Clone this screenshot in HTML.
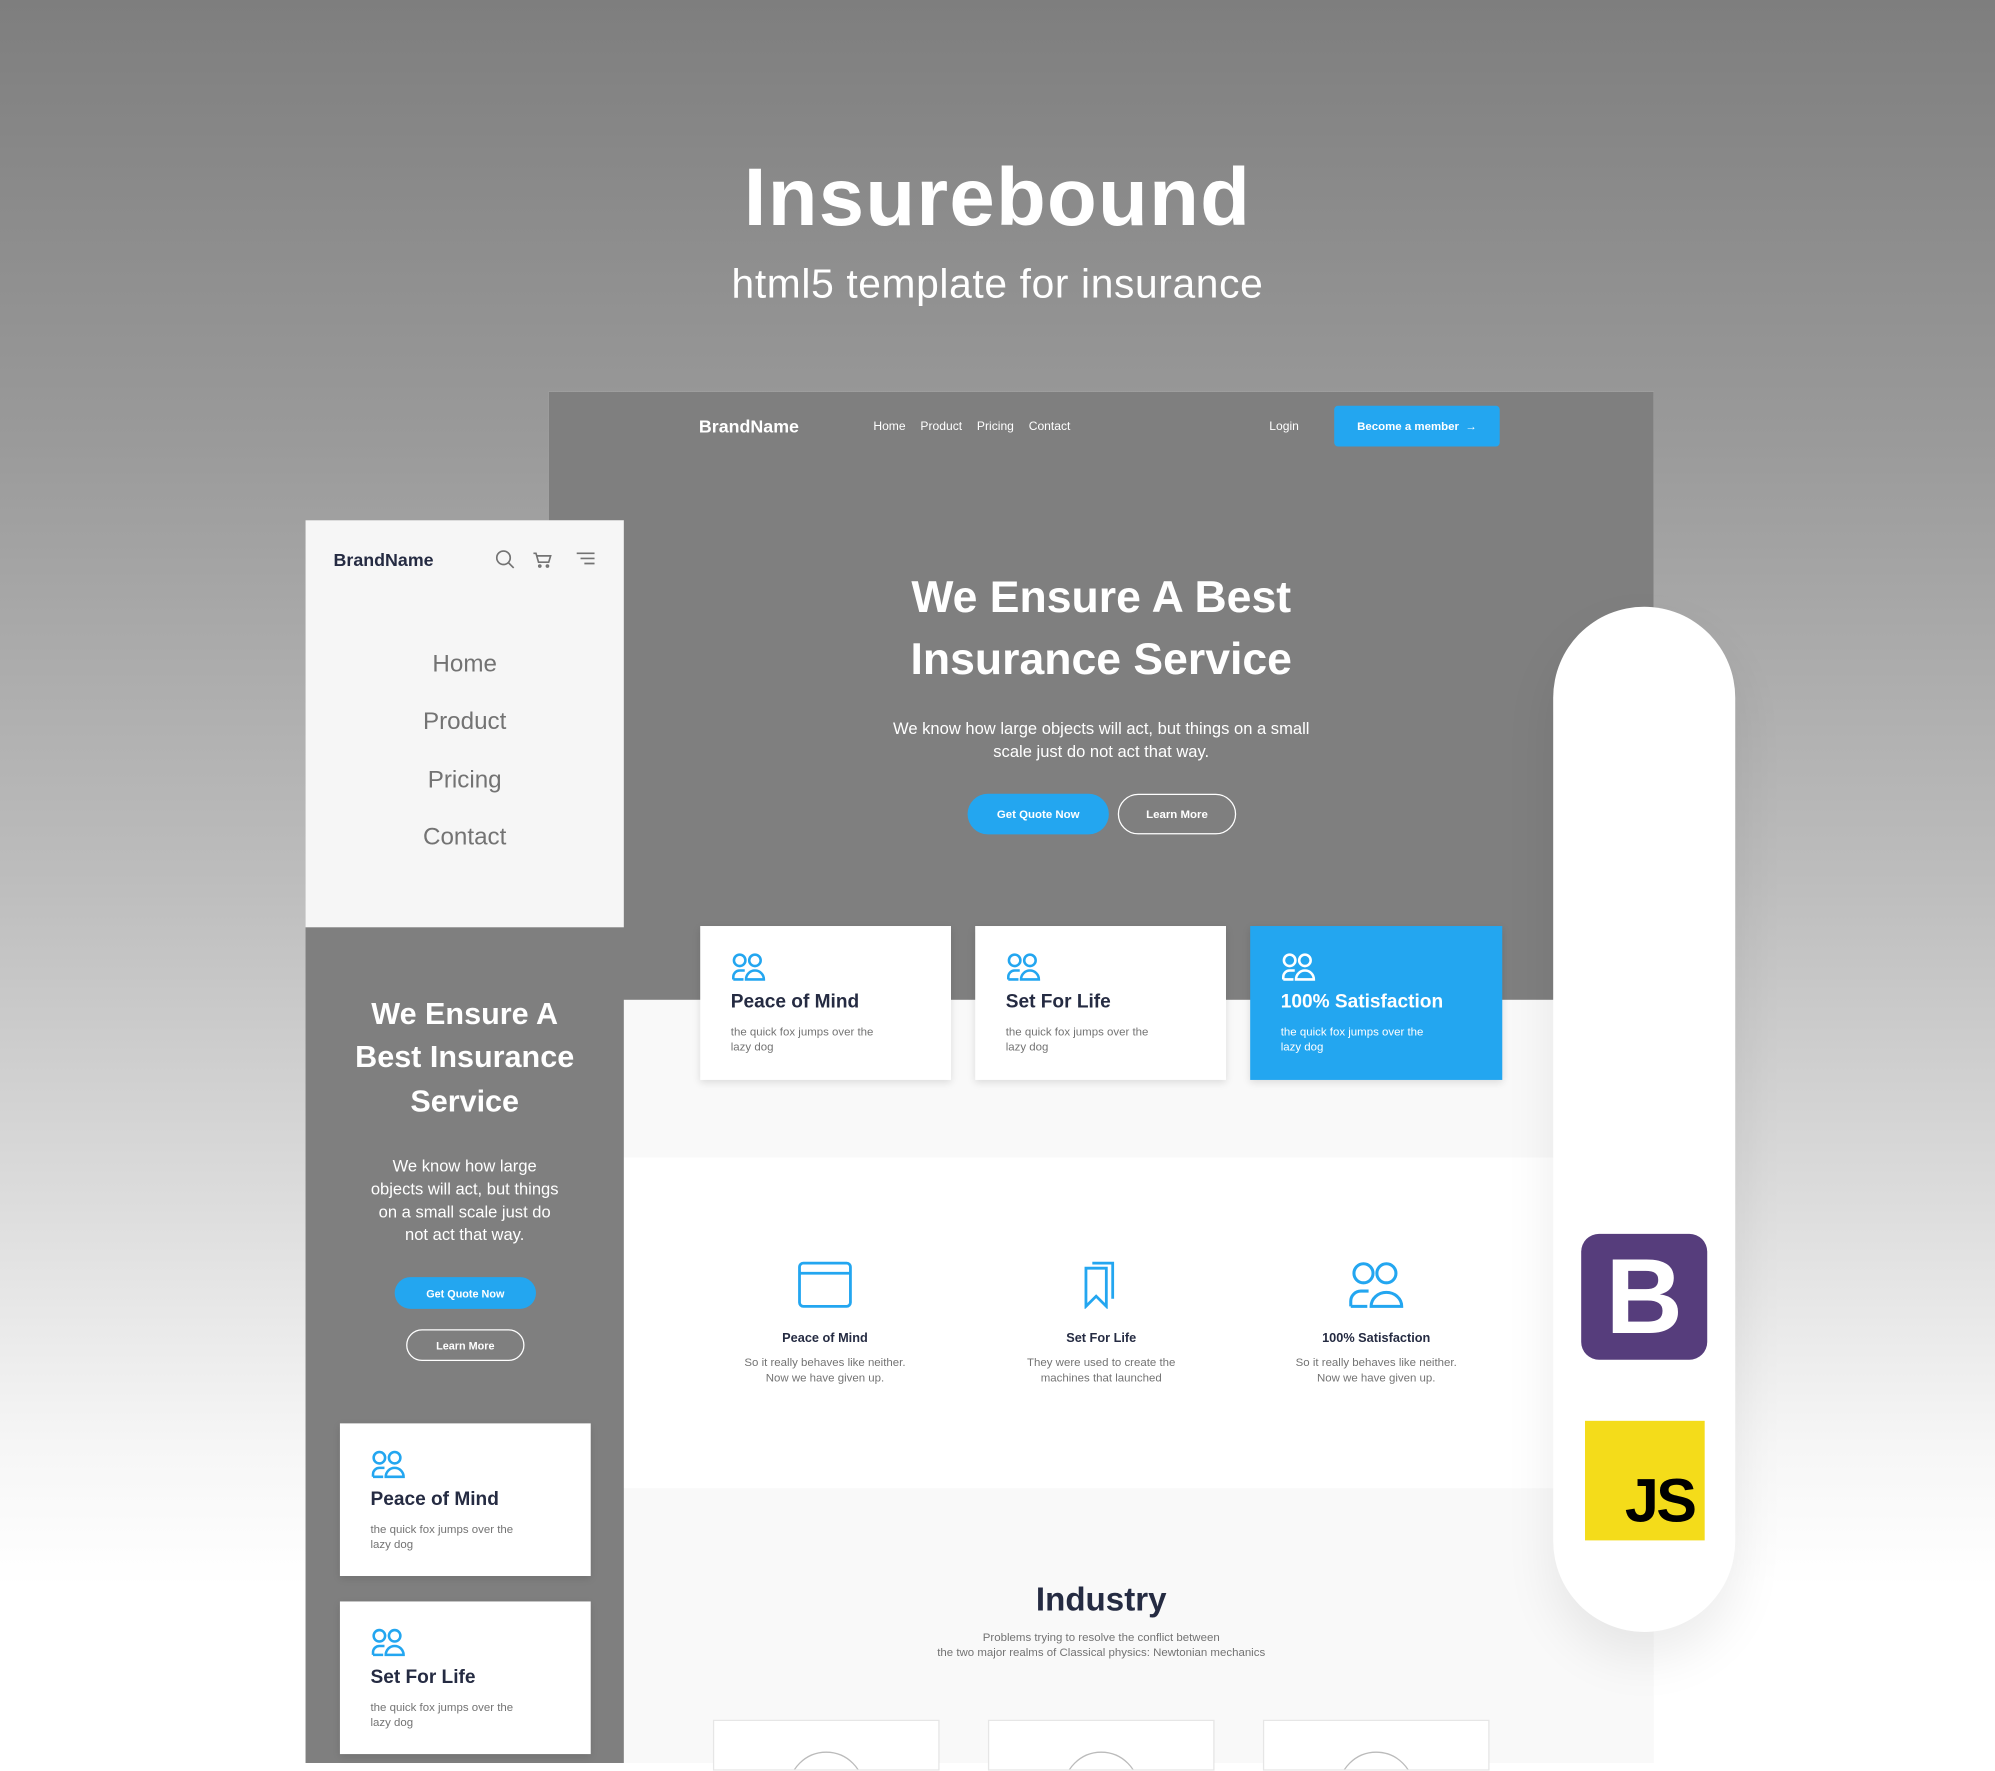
<!DOCTYPE html>
<html><head><meta charset="utf-8"><style>
*{margin:0;padding:0;box-sizing:border-box}
html{background:#fff}
html,body{width:1995px;height:1763px;overflow:hidden}
body{font-family:"Liberation Sans",sans-serif;background:#fff}
#bg{position:absolute;left:0;top:0;width:1995px;height:1763px;background:linear-gradient(180deg,#7e7e7e 0%,#9a9a9a 25%,#bdbdbd 50%,#dcdcdc 68%,#f6f6f6 82%,#fff 90%)}
#w{position:absolute;left:0;top:0;width:1567px;height:1386px;transform:scale(1.2731,1.272);transform-origin:0 0}
.a{position:absolute}
.c{text-align:center}
.b{font-weight:bold}
.btn{position:absolute;border-radius:16px;color:#fff;font-size:9px;font-weight:bold;display:flex;align-items:center;justify-content:center}
.card{position:absolute;background:#fff;box-shadow:0 2px 6px rgba(0,0,0,.12)}
.card h4{position:absolute;left:24px;top:51px;font-size:15px;color:#252b42}
.card p{position:absolute;left:24px;top:77px;font-size:9px;line-height:12px;color:#737373;width:128px}
.card svg{position:absolute;left:24px;top:21px}
</style></head><body><div id="bg"></div><div id="w">
<div class="a c b" style="left:0;width:1567px;top:118px;font-size:64px;color:#fff;letter-spacing:1px">Insurebound</div>
<div class="a c" style="left:0;width:1567px;top:205px;font-size:32px;color:#fff;letter-spacing:.5px">html5 template for insurance</div>

<!-- desktop -->
<div class="a" style="left:431px;top:308px;width:868px;height:1078px;background:#f9f9f9"></div>
<div class="a" style="left:431px;top:308px;width:868px;height:478px;background:#7f7f7f"></div>
<div class="a" style="left:431px;top:910px;width:868px;height:260px;background:#fff"></div>
<div class="a b" style="left:549px;top:327px;font-size:14px;color:#fff">BrandName</div>
<div class="a" style="left:686px;top:330px;font-size:9.5px;color:#fff;word-spacing:9px">Home Product Pricing Contact</div>
<div class="a" style="left:997px;top:330px;font-size:9.5px;color:#fff">Login</div>
<div class="a b" style="left:1048px;top:319px;width:130px;height:32px;background:#23a6f0;border-radius:3px;color:#fff;font-size:9px;display:flex;align-items:center;justify-content:center">Become a member &nbsp;→</div>
<div class="a c b" style="left:600px;width:530px;top:445px;font-size:35px;line-height:49px;color:#fff">We Ensure A Best<br>Insurance Service</div>
<div class="a c" style="left:690px;width:350px;top:564px;font-size:13px;line-height:18px;color:#fff">We know how large objects will act, but things on a small scale just do not act that way.</div>
<div class="btn" style="left:760px;top:624px;width:111px;height:32px;background:#23a6f0">Get Quote Now</div>
<div class="btn" style="left:878px;top:624px;width:93px;height:32px;border:1px solid #fff">Learn More</div>

<svg width="0" height="0" style="position:absolute"><defs><g id="ppl" fill="none" stroke-width="2"><circle cx="7" cy="6" r="4.5"/><circle cx="19" cy="6" r="4.5"/><path d="M2 21v-2a5 5 0 0 1 5-5h4M12 21a7 7 0 0 1 14 0z M2 21h8"/></g></defs></svg>

<div class="card" style="left:550px;top:728px;width:197px;height:121px"><svg width="28" height="24" stroke="#23a6f0"><use href="#ppl"/></svg><h4>Peace of Mind</h4><p>the quick fox jumps over the lazy dog</p></div>
<div class="card" style="left:766px;top:728px;width:197px;height:121px"><svg width="28" height="24" stroke="#23a6f0"><use href="#ppl"/></svg><h4>Set For Life</h4><p>the quick fox jumps over the lazy dog</p></div>
<div class="card" style="left:982px;top:728px;width:198px;height:121px;background:#23a6f0"><svg width="28" height="24" stroke="#fff"><use href="#ppl"/></svg><h4 style="color:#fff">100% Satisfaction</h4><p style="color:#fff">the quick fox jumps over the lazy dog</p></div>

<svg class="a" style="left:626px;top:991px" width="44" height="38" fill="none" stroke="#23a6f0" stroke-width="2.2"><rect x="2" y="2" width="40" height="34" rx="3"/><path d="M2 10h40"/></svg>
<svg class="a" style="left:850px;top:991px" width="30" height="38" fill="none" stroke="#23a6f0" stroke-width="2.2"><path d="M3 6h16v30l-8-8-8 8z M8 2h16v28"/></svg>
<svg class="a" style="left:1059px;top:991px" width="46" height="38" fill="none" stroke="#23a6f0" stroke-width="2.4"><circle cx="12" cy="10" r="7.5"/><circle cx="30" cy="10" r="7.5"/><path d="M2 36v-4a8 8 0 0 1 8-8h6M18 36a12 11 0 0 1 24 0z M2 36h13"/></svg>
<div class="a c" style="left:548px;width:200px;top:1047px"><div class="b" style="font-size:10px;color:#252b42">Peace of Mind</div><div style="font-size:9px;line-height:12px;color:#737373;margin-top:7px">So it really behaves like neither.<br>Now we have given up.</div></div>
<div class="a c" style="left:765px;width:200px;top:1047px"><div class="b" style="font-size:10px;color:#252b42">Set For Life</div><div style="font-size:9px;line-height:12px;color:#737373;margin-top:7px">They were used to create the<br>machines that launched</div></div>
<div class="a c" style="left:981px;width:200px;top:1047px"><div class="b" style="font-size:10px;color:#252b42">100% Satisfaction</div><div style="font-size:9px;line-height:12px;color:#737373;margin-top:7px">So it really behaves like neither.<br>Now we have given up.</div></div>
<div class="a c b" style="left:665px;width:400px;top:1242px;font-size:26px;color:#252b42">Industry</div>
<div class="a c" style="left:665px;width:400px;top:1281px;font-size:9px;line-height:12px;color:#737373">Problems trying to resolve the conflict between<br>the two major realms of Classical physics: Newtonian mechanics</div>
<div class="a" style="left:560px;top:1352px;width:178px;height:40px;background:#fff;border:1px solid #e6e6e6;overflow:hidden"><div style="position:absolute;left:58px;top:24px;width:60px;height:60px;border:1px solid #bbb;border-radius:50%"></div></div>
<div class="a" style="left:776px;top:1352px;width:178px;height:40px;background:#fff;border:1px solid #e6e6e6;overflow:hidden"><div style="position:absolute;left:58px;top:24px;width:60px;height:60px;border:1px solid #bbb;border-radius:50%"></div></div>
<div class="a" style="left:992px;top:1352px;width:178px;height:40px;background:#fff;border:1px solid #e6e6e6;overflow:hidden"><div style="position:absolute;left:58px;top:24px;width:60px;height:60px;border:1px solid #bbb;border-radius:50%"></div></div>

<!-- mobile -->
<div class="a" style="left:240px;top:409px;width:250px;height:977px;background:#7f7f7f"></div>
<div class="a" style="left:240px;top:409px;width:250px;height:320px;background:#f6f6f6"></div>
<div class="a b" style="left:262px;top:432px;font-size:14px;color:#252b42">BrandName</div>
<svg class="a" style="left:389px;top:432px" width="80" height="16" fill="none" stroke="#737373" stroke-width="1.3"><circle cx="6.5" cy="6.5" r="5.3"/><path d="M10.5 10.5l4 4"/><path d="M30 3h2l2 7h8l1.5-5H33" /><circle cx="35" cy="13" r=".8"/><circle cx="41" cy="13" r=".8"/><path d="M64 3h14M67 7h11M70 11h8"/></svg>
<div class="a c" style="left:240px;width:250px;top:500px;font-size:19px;line-height:45.3px;color:#737373">Home<br>Product<br>Pricing<br>Contact</div>
<div class="a c b" style="left:250px;width:230px;top:781px;font-size:24px;line-height:34.3px;color:#fff">We Ensure A<br>Best Insurance<br>Service</div>
<div class="a c" style="left:270px;width:190px;top:908px;font-size:13px;line-height:18px;color:#fff">We know how large<br>objects will act, but things<br>on a small scale just do<br>not act that way.</div>
<div class="btn" style="left:310px;top:1004px;width:111px;height:25px;background:#23a6f0;font-size:8.5px">Get Quote Now</div>
<div class="btn" style="left:319px;top:1045px;width:93px;height:25px;border:1px solid #fff;font-size:8.5px">Learn More</div>
<div class="card" style="left:267px;top:1119px;width:197px;height:120px"><svg width="28" height="24" stroke="#23a6f0"><use href="#ppl"/></svg><h4>Peace of Mind</h4><p>the quick fox jumps over the lazy dog</p></div>
<div class="card" style="left:267px;top:1259px;width:197px;height:120px"><svg width="28" height="24" stroke="#23a6f0"><use href="#ppl"/></svg><h4>Set For Life</h4><p>the quick fox jumps over the lazy dog</p></div>

<!-- pill -->
<div class="a" style="left:1220px;top:477px;width:143px;height:806px;background:#fff;border-radius:72px;box-shadow:0 20px 40px rgba(0,0,0,.08)"></div>
<div class="a b" style="left:1242px;top:970px;width:99px;height:99px;background:#563d7c;border-radius:14px;color:#fff;font-size:84px;line-height:99px;text-align:center">B</div>
<div class="a b" style="left:1245px;top:1117px;width:94px;height:94px;background:#f4dc1a;color:#000;font-size:48px;line-height:48px;text-align:right;padding-right:8px;padding-top:40px;letter-spacing:-2px">JS</div>
</div></body></html>
